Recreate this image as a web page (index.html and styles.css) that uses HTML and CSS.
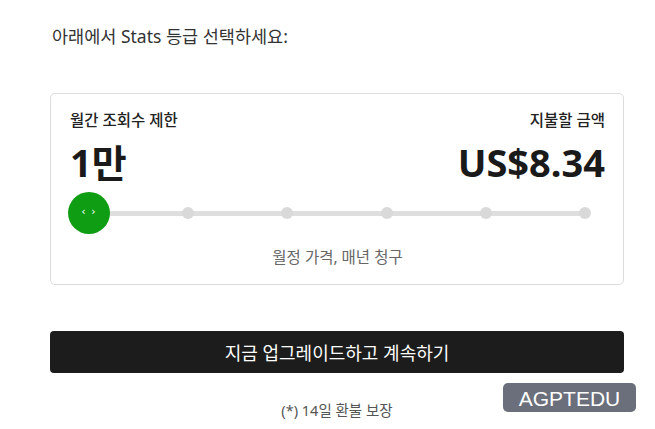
FILE: index.html
```html
<!DOCTYPE html>
<html lang="ko">
<head>
<meta charset="utf-8">
<link rel="stylesheet" href="styles.css">
</head>
<body>
<div class="page">
  <p class="intro">아래에서 Stats 등급 선택하세요:</p>
  <div class="card">
    <div class="head">
      <div class="col">
        <div class="label">월간 조회수 제한</div>
        <div class="value">1만</div>
      </div>
      <div class="col right">
        <div class="label">지불할 금액</div>
        <div class="value">US$8.34</div>
      </div>
    </div>
    <div class="slider">
      <div class="stop"><span class="thumb">‹ ›</span></div>
      <div class="stop"><span class="dot"></span></div>
      <div class="stop"><span class="dot"></span></div>
      <div class="stop"><span class="dot"></span></div>
      <div class="stop"><span class="dot"></span></div>
      <div class="stop"><span class="dot"></span></div>
    </div>
    <div class="note">월정 가격, 매년 청구</div>
  </div>
  <button class="cta">지금 업그레이드하고 계속하기</button>
  <div class="refund">(*) 14일 환불 보장</div>
</div>
<div class="badge">AGPTEDU</div>
</body>
</html>
```
FILE: styles.css
```css
html, body {
  margin: 0;
  padding: 0;
  background: #fff;
}
body {
  font-family: "Noto Sans", "Noto Sans CJK KR", sans-serif;
  color: #222;
}
.page {
  width: 574px;
  padding: 0 0 0 50px;
}
.intro {
  margin: 0;
  padding-top: 25px;
  font-size: 17.5px;
  line-height: 22px;
  color: #333;
  padding-left: 2px;
}
.card {
  margin-top: 46px;
  border: 1px solid #dcdcdc;
  border-radius: 5px;
  padding: 16px 18px 16px 19px;
  height: 158px;
}
.head {
  display: flex;
  justify-content: space-between;
}
.col.right {
  text-align: right;
}
.label {
  font-size: 15.5px;
  font-weight: 500;
  line-height: 20px;
  color: #222;
}
.value {
  font-size: 38px;
  font-weight: 700;
  line-height: 44px;
  margin-top: 10px;
  color: #1a1a1a;
}
.slider {
  position: relative;
  display: flex;
  justify-content: space-between;
  margin: 8px 20px 0 19px;
  height: 42px;
  align-items: center;
}
.slider::before {
  content: "";
  position: absolute;
  left: 0;
  right: 0;
  top: 19px;
  height: 5px;
  background: #dedede;
}
.stop {
  position: relative;
  width: 0;
  display: flex;
  justify-content: center;
}
.dot {
  flex: none;
  width: 12px;
  height: 12px;
  border-radius: 50%;
  background: #d9d9d9;
}
.thumb {
  flex: none;
  width: 42px;
  height: 42px;
  border-radius: 50%;
  background: #0f9d14;
  color: #fff;
  font-size: 11px;
  line-height: 40px;
  text-align: center;
  letter-spacing: 1px;
  font-family: "DejaVu Sans", sans-serif;
}
.note {
  text-align: center;
  margin-top: 13px;
  font-size: 15.5px;
  color: #666;
  line-height: 20px;
}
.cta {
  display: block;
  width: 574px;
  height: 42px;
  margin-top: 46px;
  border: 0;
  border-radius: 4px;
  background: #1c1c1c;
  color: #fff;
  font-family: "Noto Sans", "Noto Sans CJK KR", sans-serif;
  font-size: 18px;
  font-weight: 400;
  padding: 0;
}
.refund {
  text-align: center;
  margin-top: 28px;
  font-size: 14.5px;
  color: #555;
  line-height: 18px;
}
.badge {
  position: absolute;
  left: 503px;
  top: 383px;
  width: 133px;
  height: 29px;
  background: #6a6f7b;
  border-radius: 5px;
  color: #fff;
  font-family: "Liberation Sans", Arial, sans-serif;
  font-size: 21px;
  line-height: 31px;
  text-align: center;
}
```
